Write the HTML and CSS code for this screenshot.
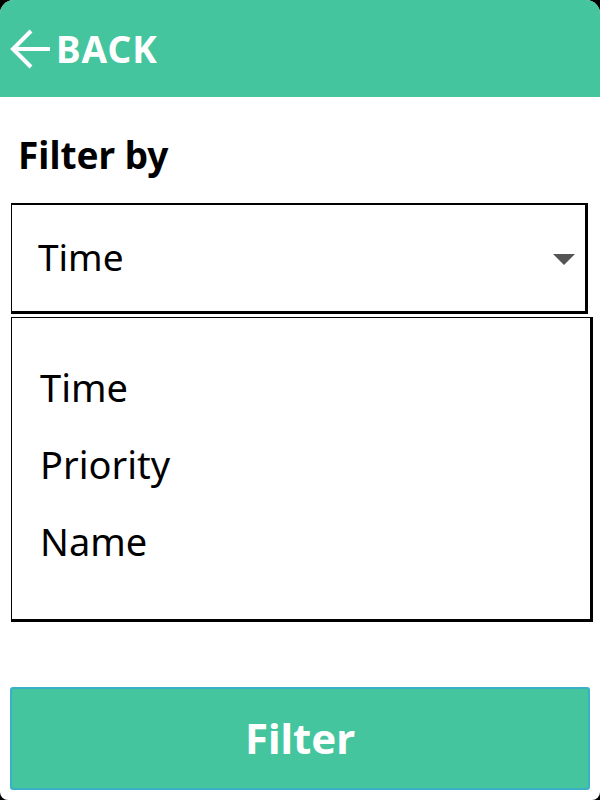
FILE: index.html
```html
<!DOCTYPE html>
<html>
<head>
    <title>Filter</title>
    <meta name="viewport" content="width=device-width, initial-scale=1" charset="UTF-8">
    <link rel="stylesheet" href="styles.css">
</head>
<body>
<section class="screen">
    <header class="topbar">
        <a class="back" href="#">
            <svg class="back-arrow" width="42" height="40" viewBox="0 0 42 40">
                <path d="M22 2 L4 20 L22 38 M4 20 H41" fill="none" stroke="white" stroke-width="4"/>
            </svg>
            <span>BACK</span>
        </a>
    </header>
    <article class="content">
        <h2 class="label">Filter by</h2>
        <div class="select">
            <span>Time</span>
            <span class="caret"></span>
        </div>
        <ul class="options">
            <li>Time</li>
            <li>Priority</li>
            <li>Name</li>
        </ul>
    </article>
    <footer class="actions">
        <button type="button" class="filter-btn">Filter</button>
    </footer>
</section>
</body>
</html>
```

FILE: styles.css
```css
    body {
        margin: 0;
        background-color: black;
        font-family: "Noto Sans", "Open Sans", sans-serif;
    }

    .screen {
        width: 600px;
        height: 800px;
        background-color: white;
        border-radius: 14px 14px 8px 8px;
        overflow: hidden;
        display: flex;
        flex-direction: column;
    }

    .topbar {
        height: 97px;
        background-color: #45c59e;
        display: flex;
        align-items: center;
        padding-left: 9px;
    }

    .back {
        display: flex;
        align-items: center;
        color: white;
        text-decoration: none;
        font-weight: bold;
        font-size: 37px;
        letter-spacing: 1px;
    }

    .back-arrow { margin-right: 5px; }

    .content {
        padding: 0 11px;
        flex: 1;
    }

    .label {
        margin: 0;
        padding: 32px 0 0 7px;
        font-size: 37px;
        font-weight: bold;
        color: black;
        height: 106px;
        box-sizing: border-box;
    }

    .select {
        height: 111px;
        box-sizing: border-box;
        border: 1px solid black;
        border-top-width: 2px;
        border-right-width: 3px;
        border-bottom-width: 3px;
        display: flex;
        align-items: center;
        justify-content: space-between;
        padding: 0 10px 4px 26px;
        font-size: 37px;
        margin-right: 1px;
    }

    .caret {
        width: 0;
        height: 0;
        border-left: 11px solid transparent;
        border-right: 11px solid transparent;
        border-top: 11px solid #555;
        margin-top: 6px;
    }

    .options {
        list-style: none;
        margin: 3px -4px 0 0;
        padding: 31px 0 16px 28px;
        height: 305px;
        box-sizing: border-box;
        border: 1px solid black;
        border-right-width: 3px;
        border-bottom-width: 3px;
        font-size: 38px;
    }

    .options li {
        height: 77px;
        line-height: 77px;
    }

    .actions {
        padding: 0 10px 10px 10px;
    }

    .filter-btn {
        width: 100%;
        height: 103px;
        background-color: #45c59e;
        border: 2px solid #3aafc6;
        border-radius: 3px;
        color: white;
        font-family: inherit;
        font-size: 42px;
        font-weight: bold;
        padding-bottom: 4px;
    }
```
